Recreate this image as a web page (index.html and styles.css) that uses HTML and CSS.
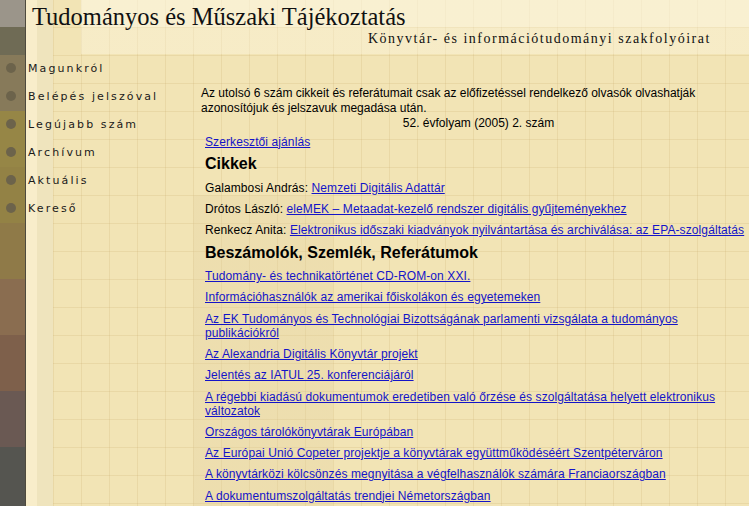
FILE: index.html
```html
<!DOCTYPE html>
<html lang="hu">
<head>
<meta charset="utf-8">
<title>Tudományos és Műszaki Tájékoztatás</title>
<link rel="stylesheet" href="styles.css">
</head>
<body>
<div class="page">
  <header class="header">
    <h1 class="title">Tudományos és Műszaki Tájékoztatás</h1>
    <div class="subtitle">Könyvtár- és információtudományi szakfolyóirat</div>
  </header>
  <div class="layout">
    <nav class="nav">
      <a class="nav-item" href="#"><span class="bullet"></span><span class="nav-text">Magunkról</span></a>
      <a class="nav-item" href="#"><span class="bullet"></span><span class="nav-text">Belépés jelszóval</span></a>
      <a class="nav-item" href="#"><span class="bullet"></span><span class="nav-text">Legújabb szám</span></a>
      <a class="nav-item" href="#"><span class="bullet"></span><span class="nav-text">Archívum</span></a>
      <a class="nav-item" href="#"><span class="bullet"></span><span class="nav-text">Aktuális</span></a>
      <a class="nav-item" href="#"><span class="bullet"></span><span class="nav-text">Kereső</span></a>
    </nav>
    <main class="content">
      <p class="notice">Az utolsó 6 szám cikkeit és referátumait csak az előfizetéssel rendelkező olvasók olvashatják azonosítójuk és jelszavuk megadása után.</p>
      <div class="volume">52. évfolyam (2005) 2. szám</div>
      <div class="list">
        <div class="item first"><a href="#">Szerkesztői ajánlás</a></div>
        <h2 class="heading">Cikkek</h2>
        <div class="item">Galambosi András: <a href="#">Nemzeti Digitális Adattár</a></div>
        <div class="item">Drótos László: <a href="#">eleMEK – Metaadat-kezelő rendszer digitális gyűjteményekhez</a></div>
        <div class="item">Renkecz Anita: <a href="#">Elektronikus időszaki kiadványok nyilvántartása és archiválása: az EPA-szolgáltatás</a></div>
        <h2 class="heading">Beszámolók, Szemlék, Referátumok</h2>
        <div class="item"><a href="#">Tudomány- és technikatörténet CD-ROM-on XXI.</a></div>
        <div class="item"><a href="#">Információhasználók az amerikai főiskolákon és egyetemeken</a></div>
        <div class="item"><a href="#">Az EK Tudományos és Technológiai Bizottságának parlamenti vizsgálata a tudományos publikációkról</a></div>
        <div class="item"><a href="#">Az Alexandria Digitális Könyvtár projekt</a></div>
        <div class="item"><a href="#">Jelentés az IATUL 25. konferenciájáról</a></div>
        <div class="item"><a href="#">A régebbi kiadású dokumentumok eredetiben való őrzése és szolgáltatása helyett elektronikus változatok</a></div>
        <div class="item"><a href="#">Országos tárolókönyvtárak Európában</a></div>
        <div class="item"><a href="#">Az Európai Unió Copeter projektje a könyvtárak együttműködéséért Szentpéterváron</a></div>
        <div class="item"><a href="#">A könyvtárközi kölcsönzés megnyitása a végfelhasználók számára Franciaországban</a></div>
        <div class="item"><a href="#">A dokumentumszolgáltatás trendjei Németországban</a></div>
      </div>
    </main>
  </div>
</div>
</body>
</html>
```

FILE: styles.css
```css
html, body {
  margin: 0;
  padding: 0;
}

body {
  width: 749px;
  height: 506px;
  overflow: hidden;
  font-family: "Liberation Sans", Arial, sans-serif;
  font-size: 12px;
  color: #000;
  background-color: #f2e4b5;
  background-image:
    linear-gradient(to bottom,
      #9b958a 0, #9b958a 27px,
      #6f6b55 27px, #6f6b55 55px,
      #877a5a 55px, #877a5a 111px,
      #968646 111px, #968646 167px,
      #938245 167px, #938245 223px,
      #8f7a48 223px, #8f7a48 279px,
      #8a6d50 279px, #8a6d50 335px,
      #7e604b 335px, #7e604b 391px,
      #6a5953 391px, #6a5953 447px,
      #555550 447px, #555550 506px),
    linear-gradient(to right, #4e4a3e 0, #4e4a3e 1px, #f8edca 1px, #f8edca 12px, #efe4bd 12px, #efe4bd 28px),
    linear-gradient(to bottom, rgba(255, 250, 232, 0.55) 0, rgba(255, 250, 232, 0.55) 27px, rgba(255, 250, 232, 0.35) 27px, rgba(255, 250, 232, 0.35) 54px, transparent 54px),
    linear-gradient(to right, rgba(226, 208, 160, 0.3) 0, rgba(226, 208, 160, 0.3) 140px, transparent 140px),
    repeating-linear-gradient(to right, transparent 0, transparent 27px, rgba(200, 172, 110, 0.22) 27px, rgba(200, 172, 110, 0.22) 28px),
    repeating-linear-gradient(to bottom, transparent 0, transparent 27px, rgba(200, 172, 110, 0.22) 27px, rgba(200, 172, 110, 0.22) 28px);
  background-size:
    25px 506px,
    28px 506px,
    749px 506px,
    749px 506px,
    749px 506px,
    749px 506px;
  background-position:
    0 0,
    25px 0,
    81px 0,
    193px 195px,
    26px 0,
    0 0;
  background-repeat: no-repeat;
}

.page {
  display: flex;
  flex-direction: column;
}

.header {
  height: 54px;
  display: flex;
  flex-direction: column;
  padding-left: 32px;
  box-sizing: border-box;
}

.title {
  margin: 0;
  padding-top: 5px;
  font-family: "Liberation Serif", "Times New Roman", serif;
  font-weight: normal;
  font-size: 24.5px;
  line-height: 24px;
  color: #111;
}

.subtitle {
  align-self: flex-start;
  margin-left: 336px;
  margin-top: 2px;
  font-family: "Liberation Serif", "Times New Roman", serif;
  font-size: 14px;
  line-height: 16px;
  letter-spacing: 1.5px;
  color: #111;
}

.layout {
  display: flex;
}

.nav {
  width: 201px;
  flex: none;
  display: flex;
  flex-direction: column;
}

.nav-item {
  height: 28px;
  display: flex;
  align-items: center;
  text-decoration: none;
  color: #1a1a1a;
}

.bullet {
  width: 10px;
  height: 10px;
  border-radius: 50%;
  background: #6c634b;
  margin-left: 6px;
  margin-right: 12px;
  flex: none;
}

.nav-text {
  font-family: "DejaVu Sans", Verdana, sans-serif;
  font-size: 11px;
  letter-spacing: 2.1px;
}

.content {
  width: 555px;
  flex: none;
  padding-top: 32px;
}

.notice {
  margin: 0;
  line-height: 15px;
  width: 548px;
}

.volume {
  text-align: center;
  line-height: 15px;
}

.list {
  padding-left: 4px;
  display: flex;
  flex-direction: column;
}

.item {
  line-height: 14px;
  margin-top: 7.3px;
  max-width: 540px;
  letter-spacing: 0.1px;
}

.item.first {
  margin-top: 3.5px;
}

.heading {
  margin: 5.5px 0 0 0;
  font-size: 16px;
  line-height: 19px;
  font-weight: bold;
}

.heading + .item {
  margin-top: 7.5px;
}

a {
  color: #1414c8;
  text-decoration: underline;
}
```
